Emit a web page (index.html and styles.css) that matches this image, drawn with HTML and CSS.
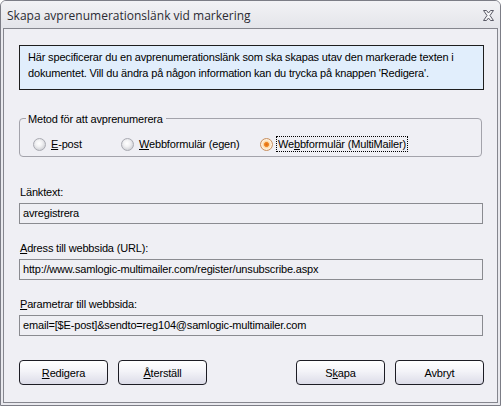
FILE: index.html
```html
<!DOCTYPE html>
<html lang="sv">
<head>
<meta charset="utf-8">
<title>Skapa avprenumerationslänk vid markering</title>
<link rel="stylesheet" href="styles.css">
</head>
<body>
<div class="window">
  <div class="titlebar">
    <span class="title">Skapa avprenumerationslänk vid markering</span>
    <svg class="close" width="13" height="11" viewBox="0 0 13 11">
      <path d="M1.5 0.5 H4.5 L6.5 3 L8.5 0.5 H11.5 L8 5.5 L11.5 10.5 H8.5 L6.5 8 L4.5 10.5 H1.5 L5 5.5 Z" fill="#f4f4f6" stroke="#5a5a66" stroke-width="1" stroke-linejoin="round"/>
    </svg>
  </div>
  <div class="client">
    <div class="info">Här specificerar du en avprenumerationslänk som ska skapas utav den markerade texten i dokumentet. Vill du ändra på någon information kan du trycka på knappen 'Redigera'.</div>

    <div class="group">
      <span class="legend">Metod för att avprenumerera</span>
      <div class="radios">
        <span class="radio r1"><span class="dot"></span><span class="rlabel"><u>E</u>-post</span></span>
        <span class="radio r2"><span class="dot"></span><span class="rlabel"><u>W</u>ebbformulär (egen)</span></span>
        <span class="radio r3"><span class="dot checked"></span><span class="rlabel focus">We<u>b</u>bformulär (MultiMailer)</span></span>
      </div>
    </div>

    <div class="field first">
      <div class="label">Länktext:</div>
      <div class="input">avregistrera</div>
    </div>
    <div class="field">
      <div class="label"><u>A</u>dress till webbsida (URL):</div>
      <div class="input">http://www.samlogic-multimailer.com/register/unsubscribe.aspx</div>
    </div>
    <div class="field">
      <div class="label"><u>P</u>arametrar till webbsida:</div>
      <div class="input">email=[$E-post]&amp;sendto=reg104@samlogic-multimailer.com</div>
    </div>

    <div class="buttons">
      <div class="btngroup">
        <div class="btn"><u>R</u>edigera</div>
        <div class="btn"><u>Å</u>terställ</div>
      </div>
      <div class="btngroup">
        <div class="btn">S<u>k</u>apa</div>
        <div class="btn">Avbryt</div>
      </div>
    </div>
  </div>
</div>
</body>
</html>
```
FILE: styles.css
```css
html, body {
  margin: 0;
  padding: 0;
  background: #ffffff;
}
body {
  font-family: "Liberation Sans", Arial, sans-serif;
  font-size: 11px;
  letter-spacing: -0.17px;
  color: #000;
}
.window {
  width: 501px;
  height: 406px;
  box-sizing: border-box;
  border: 1px solid #7c7d86;
  border-radius: 6px 6px 0 0;
  background: #e9e9ee;
  display: flex;
  flex-direction: column;
}
.titlebar {
  height: 27px;
  display: flex;
  align-items: center;
  justify-content: space-between;
  padding: 0 5px 0 6px;
  background: linear-gradient(#f2f2f5, #e4e5ea);
  border-radius: 5px 5px 0 0;
}
.title {
  font-family: "Open Sans", "DejaVu Sans", sans-serif;
  font-size: 12px;
  letter-spacing: 0;
  color: #2b2b33;
  padding-top: 2px;
}
.close {
  display: block;
  margin-top: 1px;
}
.client {
  flex: 1;
  margin: 0 2px 2px 2px;
  border: 1px solid #85868e;
  background: #efeff4;
  padding: 16px 13px 0 15px;
  display: flex;
  flex-direction: column;
}
.info {
  height: 45px;
  box-sizing: border-box;
  border: 1px solid #1e1e1e;
  background: #e1eefc;
  padding: 3px 8px 0 8px;
  line-height: 16px;
}
.group {
  position: relative;
  margin-top: 28px;
  margin-right: 2px;
  height: 39px;
  box-sizing: border-box;
  border: 1px solid #a3a3ab;
  border-radius: 4px;
}
.legend {
  position: absolute;
  top: -8px;
  left: 6px;
  padding: 0 3px 0 2px;
  line-height: 16px;
  background: #efeff4;
}
.radios {
  display: flex;
  padding: 17px 0 0 13px;
}
.radio {
  display: flex;
  align-items: center;
  height: 16px;
}
.r1 { width: 88px; }
.r2 { width: 139px; }
.dot {
  width: 13px;
  height: 13px;
  box-sizing: border-box;
  border-radius: 50%;
  border: 1px solid #a9aab2;
  background: radial-gradient(circle at 45% 40%, #ffffff 0, #f2f2f4 35%, #d2d3d8 75%, #c4c5cb 100%);
  margin-right: 3px;
}
.dot.checked {
  border-color: #c89060;
  background: radial-gradient(circle, #e06a0c 0, #f08a2a 28%, #fbd49c 36%, #fff3e2 62%, #e9c7a3 100%);
}
.rlabel {
  line-height: 14px;
  padding: 0 1px;
  border: 1px dotted transparent;
}
.rlabel.focus {
  border-color: #000;
}
.field {
  margin-top: 16px;
  margin-right: 1px;
}
.field.first {
  margin-top: 27px;
}
.label {
  line-height: 16px;
  padding-left: 1px;
}
.input {
  margin-top: 3px;
  height: 21px;
  box-sizing: border-box;
  border: 1px solid #8a8b90;
  background: #efeff4;
  padding: 0 3px;
  line-height: 19px;
  white-space: nowrap;
  overflow: hidden;
}
.buttons {
  margin-top: 24px;
  display: flex;
  justify-content: space-between;
}
.btngroup {
  display: flex;
  gap: 10px;
}
.btn {
  width: 89px;
  height: 25px;
  box-sizing: border-box;
  border: 1px solid #1c1c24;
  border-radius: 4px;
  background: linear-gradient(#ffffff, #f3f3f8 45%, #dcdce8);
  display: flex;
  align-items: center;
  justify-content: center;
}
```
